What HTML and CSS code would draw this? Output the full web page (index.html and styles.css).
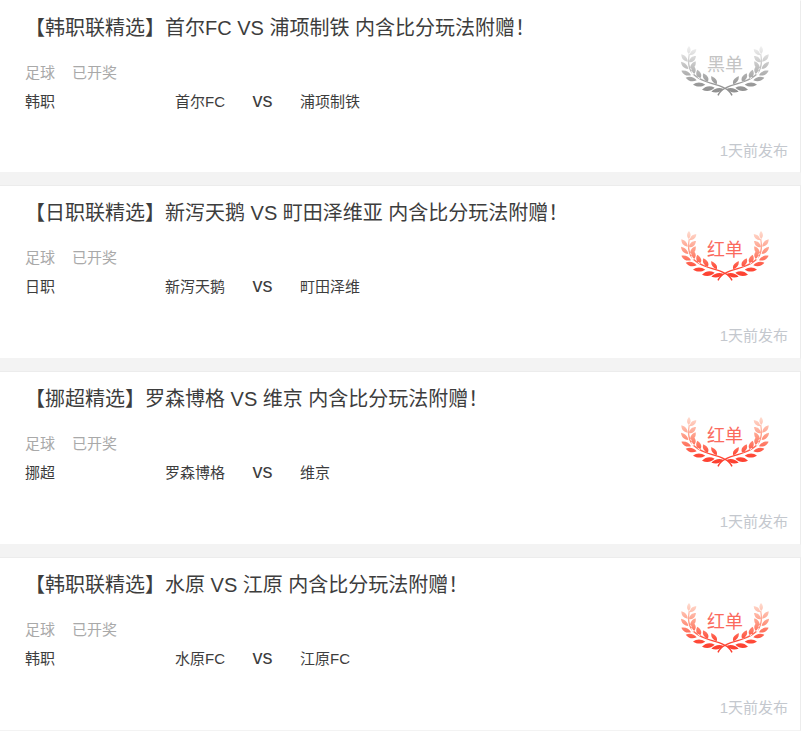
FILE: index.html
```html
<!DOCTYPE html>
<html lang="zh-CN">

<head>
  <meta charset="UTF-8">
  <meta name="viewport" content="width=device-width, initial-scale=1.0">
  <title>足球精选</title>
  <link rel="stylesheet" href="styles.css">
</head>

<body>
  <!-- shared laurel wreath, one branch mirrored around the middle -->
  <svg class="defs" width="0" height="0" aria-hidden="true">
    <defs>
      <linearGradient id="red" gradientUnits="userSpaceOnUse" x1="0" y1="30" x2="0" y2="185">
        <stop offset="0" stop-color="#ffe0d4"/>
        <stop offset="0.4" stop-color="#ff9a84"/>
        <stop offset="0.75" stop-color="#ff4a38"/>
        <stop offset="1" stop-color="#fb3a2c"/>
      </linearGradient>
      <linearGradient id="grey" gradientUnits="userSpaceOnUse" x1="0" y1="30" x2="0" y2="185">
        <stop offset="0" stop-color="#f4f4f4"/>
        <stop offset="0.4" stop-color="#c4c4c4"/>
        <stop offset="0.75" stop-color="#9a9a9a"/>
        <stop offset="1" stop-color="#8a8a8a"/>
      </linearGradient>
      <path id="branch" d="M56 56C52 78 53 94 61 109C71 127 96 139 126 148C156 156 176 164 184 182L188 180C180 162 160 153 128 144C98 135 74 123 65 107C57 92 56 78 60 56Z
        M56 56C49 50 50 40 57 33C64 41 63 51 56 56Z
        M59 61C61 49 68 43 79 43C78 54 71 60 59 61Z
        M53 80C40 78 34 70 34 58C46 61 53 69 53 80Z
        M57 82C59 69 66 63 78 63C76 76 70 82 57 82Z
        M55 102C41 100 34 92 33 80C46 83 54 91 55 102Z
        M60 103C60 90 67 82 77 79C79 92 73 100 60 103Z
        M63 121C49 124 40 119 34 107C47 105 58 110 63 121Z
        M69 120C61 111 63 101 71 92C80 102 79 112 69 120Z
        M80 136C67 142 56 139 47 128C60 123 72 126 80 136Z
        M89 132C78 124 76 114 82 104C94 112 98 122 89 132Z
        M106 149C93 157 82 156 69 149C80 140 93 140 106 149Z
        M113 141C100 134 96 125 100 115C114 122 119 131 113 141Z
        M134 158C122 169 110 170 96 164C107 153 120 151 134 158Z
        M140 148C127 142 122 134 124 123C138 130 144 138 140 148Z
        M161 162C150 173 138 174 124 170C134 160 147 156 161 162Z"/>
      <symbol id="wreath" viewBox="30 30 270 156">
        <use href="#branch"/>
        <use href="#branch" transform="translate(330 0) scale(-1 1)"/>
      </symbol>
    </defs>
  </svg>

  <main class="list">
    <article class="card">
      <div class="info">
        <h2>【韩职联精选】首尔FC VS 浦项制铁 内含比分玩法附赠！</h2>
        <p class="tags"><span>足球</span><span>已开奖</span></p>
        <div class="match">
          <span class="league">韩职</span>
          <span class="home">首尔FC</span>
          <span class="vs">vs</span>
          <span class="away">浦项制铁</span>
        </div>
      </div>
      <div class="side">
        <div class="result black"><svg aria-hidden="true"><use href="#wreath"/></svg><span>黑单</span></div>
        <time>1天前发布</time>
      </div>
    </article>

    <article class="card">
      <div class="info">
        <h2>【日职联精选】新泻天鹅 VS 町田泽维亚 内含比分玩法附赠！</h2>
        <p class="tags"><span>足球</span><span>已开奖</span></p>
        <div class="match">
          <span class="league">日职</span>
          <span class="home">新泻天鹅</span>
          <span class="vs">vs</span>
          <span class="away">町田泽维</span>
        </div>
      </div>
      <div class="side">
        <div class="result"><svg aria-hidden="true"><use href="#wreath"/></svg><span>红单</span></div>
        <time>1天前发布</time>
      </div>
    </article>

    <article class="card">
      <div class="info">
        <h2>【挪超精选】罗森博格 VS 维京 内含比分玩法附赠！</h2>
        <p class="tags"><span>足球</span><span>已开奖</span></p>
        <div class="match">
          <span class="league">挪超</span>
          <span class="home">罗森博格</span>
          <span class="vs">vs</span>
          <span class="away">维京</span>
        </div>
      </div>
      <div class="side">
        <div class="result"><svg aria-hidden="true"><use href="#wreath"/></svg><span>红单</span></div>
        <time>1天前发布</time>
      </div>
    </article>

    <article class="card">
      <div class="info">
        <h2>【韩职联精选】水原 VS 江原 内含比分玩法附赠！</h2>
        <p class="tags"><span>足球</span><span>已开奖</span></p>
        <div class="match">
          <span class="league">韩职</span>
          <span class="home">水原FC</span>
          <span class="vs">vs</span>
          <span class="away">江原FC</span>
        </div>
      </div>
      <div class="side">
        <div class="result"><svg aria-hidden="true"><use href="#wreath"/></svg><span>红单</span></div>
        <time>1天前发布</time>
      </div>
    </article>
  </main>
</body>

</html>
```
FILE: styles.css
```css
* {
  box-sizing: border-box;
}

body {
  margin: 0;
  background-color: #f3f3f3;
  color: #3d3d3d;
  font-family: "Liberation Sans", Arial, "Noto Sans CJK SC", sans-serif;
  font-size: 15px;
}

.defs {
  position: absolute;
}

.list {
  display: flex;
  flex-direction: column;
  gap: 12px;
}

.card {
  display: flex;
  justify-content: space-between;
  padding: 12px 12px 10px 25px;
  background-color: #fff;
  border: 1px solid #ececec;
  border-left: 0;
  border-bottom-color: #f3f3f3;
}

.card:first-child {
  padding-bottom: 9px;
  border-top-color: #fff;
}

.info {
  flex: 1;
}

.card h2 {
  margin: 0;
  font-size: 20px;
  font-weight: normal;
  line-height: 30px;
}

.tags {
  display: flex;
  gap: 17px;
  margin: 16px 0 0;
  color: #a9a9a9;
  line-height: 28px;
}

.match {
  display: flex;
  align-items: baseline;
  line-height: 30px;
}

.league {
  width: 100px;
}

.home {
  width: 100px;
  text-align: right;
}

.vs {
  width: 75px;
  font-size: 20px;
  line-height: 20px;
  text-align: center;
}

.side {
  display: flex;
  flex-direction: column;
  align-items: flex-end;
  justify-content: space-between;
  height: 150px;
  padding-top: 32px;
  color: #c4c8ce;
}

.result {
  position: relative;
  width: 90px;
  height: 52px;
  margin-right: 18px;
  color: #fb6a5e;
  font-size: 18px;
  line-height: 40px;
  text-align: center;
}

.result svg {
  position: absolute;
  top: 0;
  left: 0;
  width: 90px;
  height: 52px;
  fill: url(#red);
}

.result span {
  position: relative;
}

.black {
  color: #c4c4c4;
}

.black svg {
  fill: url(#grey);
}

time {
  line-height: 24px;
}
```
